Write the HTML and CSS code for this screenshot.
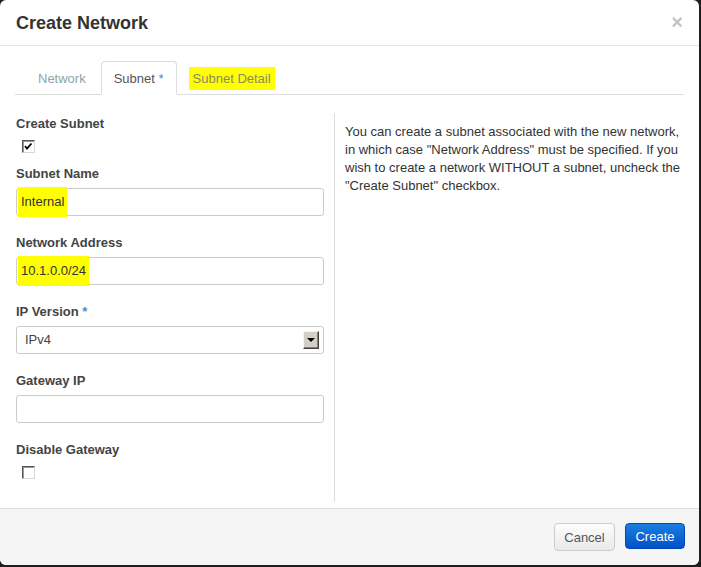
FILE: index.html
```html
<!DOCTYPE html>
<html>
<head>
<meta charset="utf-8">
<title>Create Network</title>
<link rel="stylesheet" href="styles.css">
</head>
<body>
<div class="modal">
  <div class="modal-header">
    <h3 class="title">Create Network</h3>
    <span class="close">&times;</span>
  </div>
  <div class="modal-body">
    <ul class="tabs">
      <li class="tab">Network</li>
      <li class="tab active">Subnet <span class="req">*</span></li>
      <li class="tab"><span class="hl hl-tab">Subnet Detail</span></li>
    </ul>
    <div class="row">
      <div class="form-col">
        <label class="label">Create Subnet</label>
        <span class="checkbox">
          <svg width="11" height="11" viewBox="0 0 11 11"><polyline points="2,5 4,7.5 8.5,2.5" fill="none" stroke="#000" stroke-width="1.8"/></svg>
        </span>
        <label class="label">Subnet Name</label>
        <div class="input"><span class="hl">Internal</span></div>
        <label class="label">Network Address</label>
        <div class="input"><span class="hl">10.1.0.0/24</span></div>
        <label class="label">IP Version <span class="req">*</span></label>
        <div class="input select">
          <span class="select-value">IPv4</span>
          <span class="select-btn"><span class="arrow"></span></span>
        </div>
        <label class="label">Gateway IP</label>
        <div class="input"></div>
        <label class="label">Disable Gateway</label>
        <span class="checkbox"></span>
      </div>
      <div class="help-col">
        <p>You can create a subnet associated with the new network, in which case "Network Address" must be specified. If you wish to create a network WITHOUT a subnet, uncheck the "Create Subnet" checkbox.</p>
      </div>
    </div>
  </div>
  <div class="modal-footer">
    <button class="btn btn-cancel">Cancel</button>
    <button class="btn btn-primary">Create</button>
  </div>
</div>
</body>
</html>
```

FILE: styles.css
```css
* { box-sizing: border-box; }

body {
  margin: 0;
  background: #1e1e1e;
  font-family: "Liberation Sans", Arial, sans-serif;
  font-size: 13px;
  color: #333;
}

.modal {
  width: 699px;
  height: 565px;
  background: #fff;
  border-radius: 6px;
  overflow: hidden;
  display: flex;
  flex-direction: column;
}

.modal-header {
  height: 46px;
  border-bottom: 1px solid #e5e5e5;
  display: flex;
  align-items: center;
  justify-content: space-between;
  padding: 1px 16px 0 16px;
}

.title {
  margin: 0;
  font-size: 18px;
  line-height: 20px;
  font-weight: bold;
  color: #333;
}

.close {
  font-size: 20px;
  font-weight: bold;
  line-height: 20px;
  color: #c4c4c4;
  margin-top: -2px;
}

.modal-body {
  flex: 1;
  padding: 15px 15px 0 15px;
}

.tabs {
  list-style: none;
  margin: 0;
  padding: 0 0 0 10px;
  display: flex;
  height: 34px;
  border-bottom: 1px solid #ddd;
}

.tab {
  height: 34px;
  line-height: 33px;
  padding: 0 12px;
  margin-right: 2px;
  border: 1px solid transparent;
  border-radius: 4px 4px 0 0;
  color: #8fa3a8;
}

.tab.active {
  color: #555;
  background: #fff;
  border-color: #ddd #ddd #fff #ddd;
}

.req {
  color: #3d8fd1;
}

.hl {
  background: #ffff00;
  padding: 2px 3px 2px 3px;
  margin-left: -3px;
}

.hl-tab {
  color: #8a8a6a;
  padding: 4px 4px;
}

.row {
  display: flex;
  margin-top: 18px;
}

.form-col {
  width: 319px;
  padding: 2px 10px 11px 1px;
  display: flex;
  flex-direction: column;
  align-items: flex-start;
}

.label {
  display: block;
  font-weight: bold;
  line-height: 18px;
  color: #444;
}

.checkbox {
  display: block;
  width: 13px;
  height: 13px;
  margin: 7px 0 12px 6px;
  background: #fff;
  border: 1px solid;
  border-color: #555 #d8d8d8 #d8d8d8 #555;
  box-shadow: inset 1px 1px 0 #999;
  position: relative;
}

.checkbox svg {
  display: block;
  position: absolute;
  left: 0;
  top: 0;
}

.input {
  width: 308px;
  height: 28px;
  margin: 5px 0 18px 0;
  border: 1px solid #ccc;
  border-radius: 3px;
  padding: 0 4px;
  line-height: 26px;
  color: #333;
  display: flex;
  align-items: center;
}

.select {
  padding: 0 4px 0 8px;
  justify-content: space-between;
  color: #444;
}

.select-btn {
  width: 16px;
  height: 18px;
  background: #d4d0c8;
  border: 1px solid;
  border-color: #f4f4f4 #404040 #404040 #f4f4f4;
  box-shadow: inset -1px -1px 0 #808080;
  display: flex;
  align-items: center;
  justify-content: center;
}

.arrow {
  width: 0;
  height: 0;
  border-left: 4px solid transparent;
  border-right: 4px solid transparent;
  border-top: 4px solid #000;
}

.help-col {
  flex: 1;
  border-left: 1px solid #ddd;
  padding: 10px 0 0 10px;
}

.help-col p {
  margin: 0;
  line-height: 18px;
  color: #333;
}

.modal-footer {
  height: 57px;
  border-top: 1px solid #ddd;
  background: #f5f5f5;
  display: flex;
  justify-content: flex-end;
  align-items: flex-start;
  gap: 10px;
  padding: 14px 14px 0 0;
}

.btn {
  font-family: "Liberation Sans", Arial, sans-serif;
  font-size: 13px;
  border-radius: 4px;
  padding: 0;
  cursor: pointer;
}

.btn-cancel {
  width: 61px;
  height: 28px;
  color: #555;
  background: linear-gradient(#fdfdfd, #e9e9e9);
  border: 1px solid #ccc;
}

.btn-primary {
  width: 60px;
  height: 26px;
  color: #fff;
  background: linear-gradient(#1a7fe0, #0050c8);
  border: 1px solid #0048b8;
}
```
